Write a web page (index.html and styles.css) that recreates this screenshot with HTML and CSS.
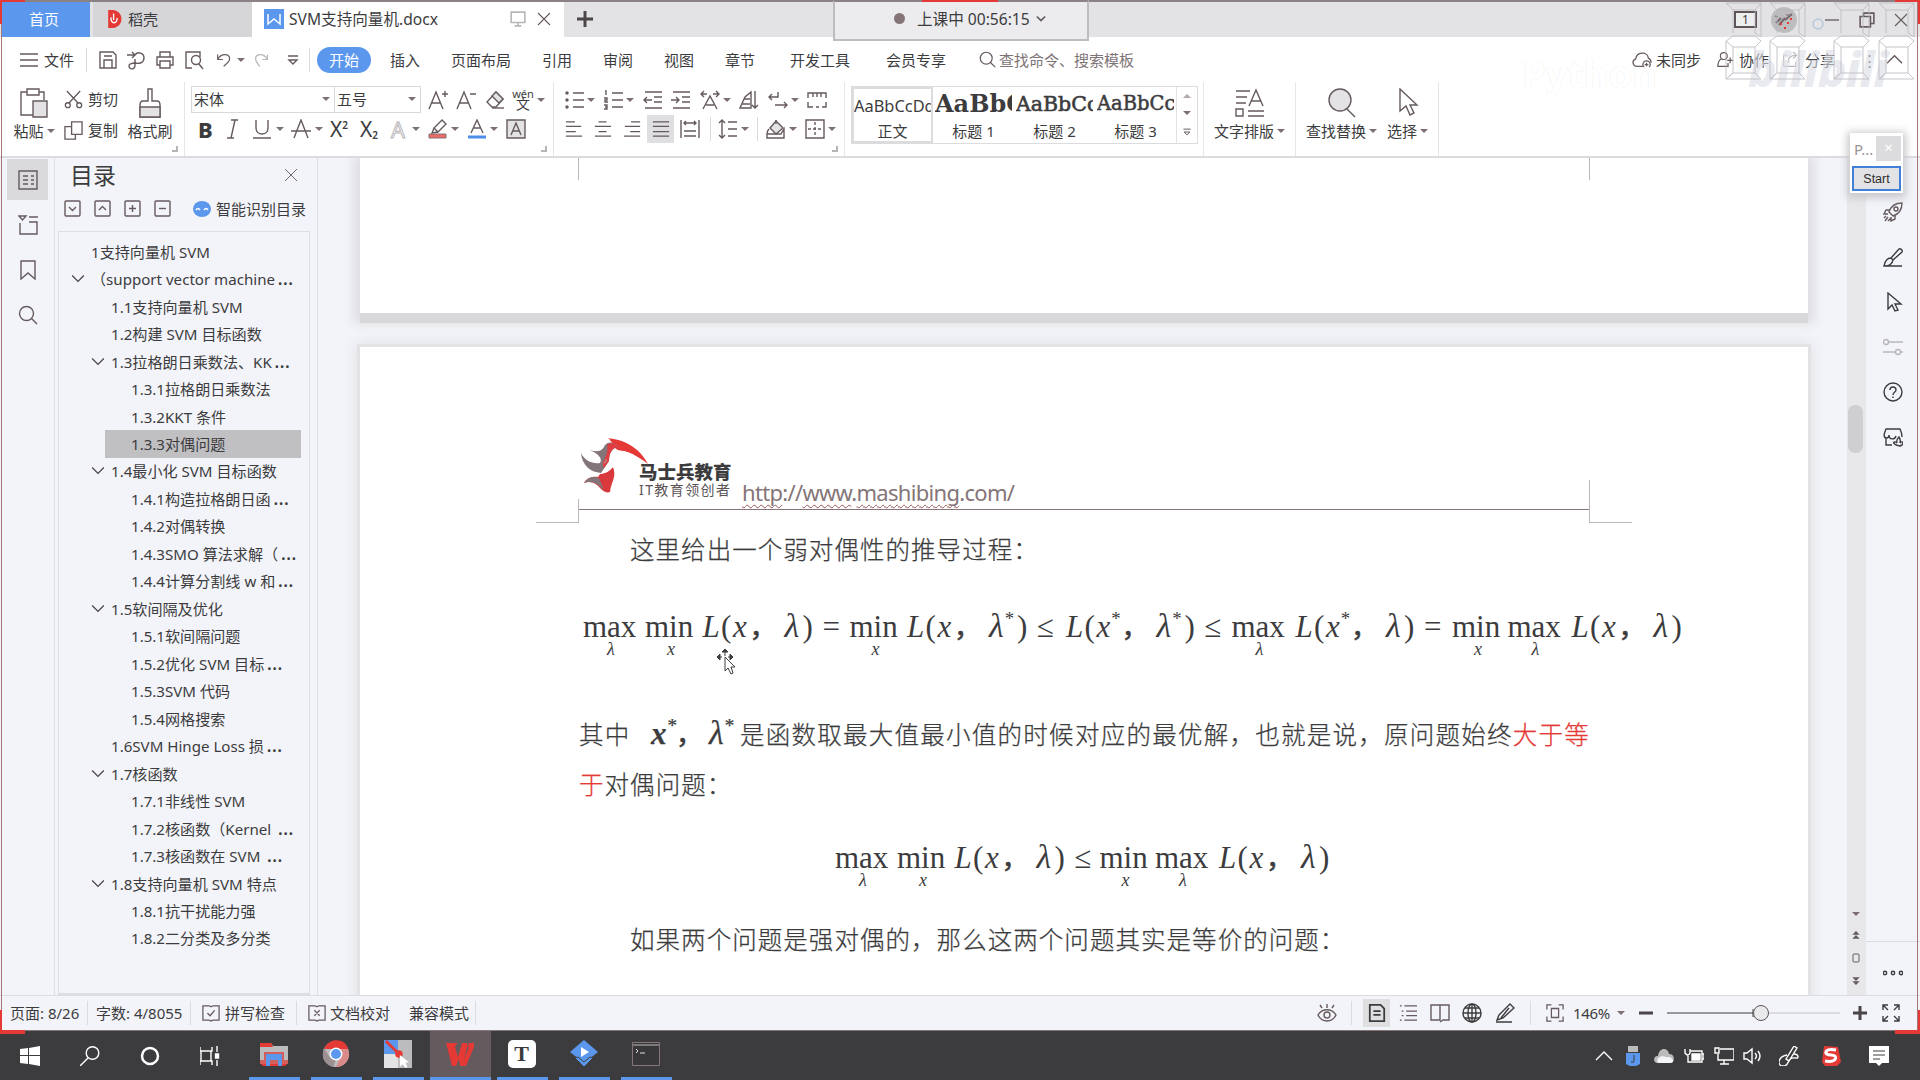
FILE: index.html
```html
<!DOCTYPE html>
<html lang="zh-CN">
<head>
<meta charset="utf-8">
<title>SVM支持向量机.docx</title>
<link rel="stylesheet" href="styles.css">
</head>
<body>
<svg class="defs" aria-hidden="true">
  <symbol id="caret" viewBox="0 0 8 6"><path d="M0 1h8L4 5z" fill="#7d6f72"/></symbol>
  <symbol id="chev" viewBox="0 0 12 12"><path d="M1 3l5 5 5-5"/></symbol>
  <symbol id="close" viewBox="0 0 14 14"><path d="M1 1l12 12M13 1L1 13"/></symbol>
  <symbol id="menu" viewBox="0 0 20 20"><path d="M1 4h18M1 10h18M1 16h18"/></symbol>
  <symbol id="save" viewBox="0 0 20 20"><path d="M2 2h13l3 3v13H2zM6 18v-8h8v8M6 6h8"/></symbol>
  <symbol id="pdf" viewBox="0 0 20 20"><path d="M1 5h8M6 2l3 3-3 3M9 5c3-4 9-2 9 3s-5 6-9 5M9 9v6c0 5-6 5-6 1 0-3 4-3 7-3"/></symbol>
  <symbol id="print" viewBox="0 0 20 20"><path d="M5 7V2h10v5M5 15H2V7h16v8h-3M5 11h10v7H5z"/></symbol>
  <symbol id="preview" viewBox="0 0 20 20"><path d="M8 18H2V2h14v5"/><circle cx="12" cy="10" r="4.5"/><path d="M15 14l4 5"/></symbol>
  <symbol id="undo" viewBox="0 0 20 20"><path d="M2 4v6h6M2 10c4-8 14-7 14-1 0 4-4 6-7 9"/></symbol>
  <symbol id="redo" viewBox="0 0 20 20"><path d="M17 4v6h-6M17 10C13 2 3 3 3 9c0 4 3 6 5 9"/></symbol>
  <symbol id="more" viewBox="0 0 12 14"><path d="M1 3h10M2 7h8l-4 4z"/></symbol>
  <symbol id="search" viewBox="0 0 20 20"><circle cx="8.5" cy="8.5" r="7"/><path d="M13.5 13.5L19 19"/></symbol>
  <symbol id="cloud" viewBox="0 0 22 20"><path d="M12 17H5C0 16 0 10 4 9c1-8 13-9 14-1 2 1 3 3 3 5"/><circle cx="16" cy="15" r="4"/><path d="M14 15h4M16 13v4"/></symbol>
  <symbol id="person" viewBox="0 0 20 20"><circle cx="8" cy="6" r="4"/><path d="M5 9c-3 2-4 5-4 9h12v-4M12 11h7M15.500 7.500v7"/></symbol>
  <symbol id="share" viewBox="0 0 20 20"><path d="M6 5H2v13h14v-5M7 14c0-6 3-9 10-9M13 1l4 4-4 4"/></symbol>
  <symbol id="paste" viewBox="0 0 30 30"><path d="M8 4H2v23h12M20 4h5v8M8 1h12v6H8z"/><path d="M14 13h14v16H14z" fill="#e3e3e5"/></symbol>
  <symbol id="cut" viewBox="0 0 20 20"><path d="M3 1l12 13M17 1L5 14"/><circle cx="4" cy="16" r="2.600"/><circle cx="16" cy="16" r="2.600"/></symbol>
  <symbol id="copy" viewBox="0 0 20 20"><path d="M8 1h11v13H8zM8 6H1v13h11v-5"/></symbol>
  <symbol id="brush" viewBox="0 0 24 30"><path d="M10 1h4v12h5c2 0 3 2 3 4v12H2V17c0-2 1-4 3-4h5z"/><path d="M2 19h20v10H2z" fill="#e3e3e5"/></symbol>
  <symbol id="eraser" viewBox="0 0 20 20"><path d="M11 2l7 7-7 8H7l-5-5z"/><path d="M11 2l7 7-4 4-7-7z" fill="#e3e3e5"/><path d="M7 18h12"/></symbol>
  <symbol id="marker" viewBox="0 0 20 20"><path d="M6 9l8-8 4 4-8 8zM6 9l-2 5 6-1"/><path d="M1 15h17v4H1z" fill="#ee6a66" stroke="#857578" stroke-width="1"/></symbol>
  <symbol id="bullets" viewBox="0 0 20 20"><path d="M8 3h11M8 10h11M8 17h11"/><g fill="#3c3c3e"><circle cx="2" cy="3" r="1"/><circle cx="2" cy="10" r="1"/><circle cx="2" cy="17" r="1"/></g></symbol>
  <symbol id="numbers" viewBox="0 0 20 20"><path d="M8 3h11M8 10h11M8 17h11M1 1h1v4M0 8h3v2H1v2h3M0 15h3v4H0M1 17h2"/></symbol>
  <symbol id="outdent" viewBox="0 0 20 20"><path d="M2 2h17M11 7h8M11 12h8M2 18h17M9 10H1M4 7l-3 3 3 3"/></symbol>
  <symbol id="indent" viewBox="0 0 20 20"><path d="M2 2h17M11 7h8M11 12h8M2 18h17M0 10h8M5 7l3 3-3 3"/></symbol>
  <symbol id="scalea" viewBox="0 0 20 20"><path d="M1 4h6M13 4h6M4 1L1 4l3 3M16 1l3 3-3 3M3 19l7-13 7 13M6 15h8"/></symbol>
  <symbol id="sort" viewBox="0 0 20 20"><path d="M1 18h11V2L6 7zM5 9h6M3 14h8M16 1v17M13 15l3 3 3-3"/></symbol>
  <symbol id="wrap" viewBox="0 0 20 20"><path d="M10 2v5H1M4 4L1 7l3 3M7 15h12M16 12l3 3-3 3"/></symbol>
  <symbol id="tabs" viewBox="0 0 20 20"><path d="M1 8V3h18v5M6 3v4M10 3v4M14 3v4M1 12v5h5M9 17h3M15 17h4v-5"/></symbol>
  <symbol id="left" viewBox="0 0 20 20"><path d="M1 2h10M1 7h17M1 13h11M1 18h18"/></symbol>
  <symbol id="center" viewBox="0 0 20 20"><path d="M5 2h9M1 7h18M5 13h9M1 18h18"/></symbol>
  <symbol id="right" viewBox="0 0 20 20"><path d="M9 2h10M2 7h17M8 13h11M1 18h18"/></symbol>
  <symbol id="justify" viewBox="0 0 20 20"><path d="M1 2h18M1 7h18M1 13h18M1 18h18"/></symbol>
  <symbol id="distribute" viewBox="0 0 20 20"><path d="M1 1v18M19 1v18M4 4h12M6 2L4 4l2 2M14 2l2 2-2 2M4 12h12M4 17h12"/></symbol>
  <symbol id="spacing" viewBox="0 0 20 20"><path d="M4 1v18M1 4l3-3 3 3M1 16l3 3 3-3M10 3h9M10 10h9M10 17h9"/></symbol>
  <symbol id="fill" viewBox="0 0 20 20"><path d="M10 2l7 7-7 6-6-6z" fill="#e3e3e5"/><path d="M10 5V1M3 10c-4 5 0 5 0 5M1 15h14l3-5v9H1z"/></symbol>
  <symbol id="borders" viewBox="0 0 20 20"><path d="M1 1h18v18H1z"/><path d="M10 3v14M3 10h14" stroke-dasharray="3 2"/></symbol>
  <symbol id="layout" viewBox="0 0 30 30"><path d="M1 3h14M1 9h11M1 15h10M1 21h7v7H1zM13 23h16M13 28h16M14 18l7-16 7 16M16 13h10"/></symbol>
  <symbol id="find" viewBox="0 0 30 30"><circle cx="13" cy="12" r="11" fill="#e3e3e5"/><path d="M20 21l8 8"/></symbol>
  <symbol id="pointer" viewBox="0 0 20 28"><path d="M2 1v22l6-5 4 9 4-2-4-8h7z"/></symbol>
  <symbol id="arrow" viewBox="0 0 20 20"><path d="M5 1v16l4-4 3 6 3-1-3-6h6z"/></symbol>
  <symbol id="toc" viewBox="0 0 20 20"><path d="M1 1h18v18H1zM5 6h5M5 10h5M5 14h5M13 6h3M13 10h3M13 14h3"/></symbol>
  <symbol id="nav" viewBox="0 0 20 20"><path d="M1 1h7L4.500 5zM11 2h9M11 7h8v12H2V8"/></symbol>
  <symbol id="bookmark" viewBox="0 0 20 20"><path d="M3 1h14v18l-7-6-7 6z"/></symbol>
  <symbol id="boxd" viewBox="0 0 18 18"><rect x="1" y="1" width="15" height="15" rx="1"/><path d="M5 7l3.500 3.500L12 7"/></symbol>
  <symbol id="boxu" viewBox="0 0 18 18"><rect x="1" y="1" width="15" height="15" rx="1"/><path d="M5 10l3.500-3.500L12 10"/></symbol>
  <symbol id="boxp" viewBox="0 0 18 18"><rect x="1" y="1" width="15" height="15" rx="1"/><path d="M5 8.500h7M8.500 5v7"/></symbol>
  <symbol id="boxm" viewBox="0 0 18 18"><rect x="1" y="1" width="15" height="15" rx="1"/><path d="M5 8.500h7"/></symbol>
  <symbol id="rocket" viewBox="0 0 20 20"><path d="M6 10c2-6 6-9 13-9 0 7-3 11-9 13zM7 8H3l-2 4h4M12 13v4l-4 2v-4M2 19l3-4M5 19l3-3M1 16l2-2"/><circle cx="13" cy="7" r="2"/></symbol>
  <symbol id="pen" viewBox="0 0 20 20"><path d="M8 11l8-9c1-1 4 1 3 3l-9 8M8 11c-4 0-6 3-7 8 5 0 8-1 9-6zM1 19h18"/></symbol>
  <symbol id="sliders" viewBox="0 0 20 20"><circle cx="3" cy="5" r="2.500"/><path d="M6 5h14M0 15h12M18 15h2"/><circle cx="15" cy="15" r="2.500"/></symbol>
  <symbol id="help" viewBox="0 0 20 20"><circle cx="10" cy="10" r="9"/><path d="M7 8c0-4 6-4 6 0 0 2-3 2-3 5M10 14.500v1.500"/></symbol>
  <symbol id="store" viewBox="0 0 20 20"><path d="M9 18H3v-7C0 10 1 7 3 2h14c2 4 2 7 2 8M1 8c1 5 5 3 5 0 0 5 6 5 7 1M13 18c-5-3-1-4 1-2-1-3 1-5 2-6 1 2 2 3 1 6 3-3 5 1 0 3z"/></symbol>
  <symbol id="spell" viewBox="0 0 20 20"><path d="M1 2h7l2 1 2-1h7v16h-7l-2 1-2-1H1zM6 10l3 3 5-6"/></symbol>
  <symbol id="proof" viewBox="0 0 20 20"><path d="M1 2h7l2 1 2-1h7v16h-7l-2 1-2-1H1zM7 7l6 6M13 7l-6 6"/></symbol>
  <symbol id="eye" viewBox="0 0 20 20"><path d="M1 12c4-7 14-7 18 0-4 8-14 8-18 0zM10 5V1M5 5L3 2M15 5l2-3"/><circle cx="10" cy="12" r="3"/></symbol>
  <symbol id="page" viewBox="0 0 20 20"><path d="M2 1h12l4 4v14H2zM6 8h8M6 12h8" stroke-width="2"/></symbol>
  <symbol id="outline" viewBox="0 0 20 20"><path d="M6 2h14M8 8h12M8 13h12M6 18h14M1 2h2M3 8h2M3 13h2M1 18h2"/></symbol>
  <symbol id="book" viewBox="0 0 20 20"><path d="M1 2h9v15H1zM10 2h9v15h-6l-3 2"/></symbol>
  <symbol id="globe" viewBox="0 0 20 20"><circle cx="10" cy="10" r="9"/><ellipse cx="10" cy="10" rx="4" ry="9"/><path d="M1 10h18M3 5h14M3 15h14M10 1v18"/></symbol>
  <symbol id="edit" viewBox="0 0 20 20"><path d="M4 12L15 1l4 4L8 15l-6 2zM14 5L6 15M1 19h16"/></symbol>
  <symbol id="fit" viewBox="0 0 20 20"><path d="M1 6V1h5M14 1h5v5M19 14v5h-5M6 19H1v-5M6 5h8v10H6z"/></symbol>
  <symbol id="expand" viewBox="0 0 20 20"><path d="M2 7V2h5M13 2h5v5M18 13v5h-5M7 18H2v-5M2 2l5 5M18 2l-5 5M18 18l-5-5M2 18l5-5"/></symbol>
</svg>

<div class="screen">
  <header class="tabbar">
    <div class="tab home">首页</div>
    <div class="tab docer"><svg class="dlogo" viewBox="0 0 16 20"><path d="M1 0h5c13 1 13 19 0 20H1z" fill="#e53935"/><path d="M4 8c0 8 7 8 7 1M7 11V4" fill="none" stroke="#fff" stroke-width="1.500"/></svg>稻壳</div>
    <div class="tab active"><span class="wlogo"><svg viewBox="0 0 20 20"><path d="M4 5v10l6-5 6 5V5" fill="none" stroke="#fff" stroke-width="1.500"/></svg></span><span class="tabname">SVM支持向量机.docx</span><svg class="i s14 pale" viewBox="0 0 14 14"><path d="M1 1h12v9H1zM7 10v3M4 13h6"/></svg><svg class="i s12"><use href="#close"/></svg></div>
    <div class="newtab"><svg class="i s14 heavy" viewBox="0 0 14 14"><path d="M7 0v14M0 7h14"/></svg></div>
    <div class="timer"><i class="dot"></i><span>上课中 00:56:15</span><svg class="i s8 bold" viewBox="0 0 12 12"><path d="M1 3l5 5 5-5"/></svg></div>
    <div class="winctl">
      <span class="count">1</span>
      <svg class="avatar" viewBox="0 0 28 28"><circle cx="14" cy="14" r="13" fill="#bdbcbe"/><path d="M6 17l5-5M9 19l6-7M15 14l7-6" stroke="#75686b" stroke-width="2" fill="none"/><path d="M5 10l3 1M16 9h4" stroke="#8d8386" stroke-width="1.500"/><path d="M17 17h2M10 18h2M20 13h2M14 22h2" stroke="#e53935" stroke-width="2"/></svg>
      <svg class="i s12" viewBox="0 0 12 12"><path d="M0 6h12"/></svg>
      <svg class="i s14" viewBox="0 0 14 14"><path d="M1 4h9v9H1zM4 4V1h9v9h-3"/></svg>
      <svg class="i s12"><use href="#close"/></svg>
    </div>
  </header>

  <nav class="menubar">
    <svg class="i"><use href="#menu"/></svg><span>文件</span><b class="vr"></b>
    <svg class="i"><use href="#save"/></svg><svg class="i"><use href="#pdf"/></svg><svg class="i"><use href="#print"/></svg><svg class="i"><use href="#preview"/></svg><svg class="i s17"><use href="#undo"/></svg><svg class="c"><use href="#caret"/></svg><svg class="i s17 pale"><use href="#redo"/></svg><svg class="i s10"><use href="#more"/></svg><b class="vr"></b>
    <span class="pill">开始</span><span>插入</span><span>页面布局</span><span>引用</span><span>审阅</span><span>视图</span><span>章节</span><span>开发工具</span><span>会员专享</span>
    <svg class="i s17"><use href="#search"/></svg><span class="hint">查找命令、搜索模板</span>
    <svg class="i"><use href="#cloud"/></svg><span>未同步</span><svg class="i s17"><use href="#person"/></svg><span>协作</span><svg class="i s17 pale"><use href="#share"/></svg><span>分享</span><span>⋮</span><svg class="i s17" viewBox="0 0 18 12"><path d="M1 10l8-8 8 8"/></svg>
  </nav>

  <section class="ribbon">
    <div class="group clip">
      <div class="big"><svg class="i s30"><use href="#paste"/></svg><span>粘贴<svg class="c"><use href="#caret"/></svg></span></div>
      <div class="pair"><div><svg class="i"><use href="#cut"/></svg>剪切</div><div><svg class="i"><use href="#copy"/></svg>复制</div></div>
      <div class="big"><svg class="i s30"><use href="#brush"/></svg><span>格式刷</span></div>
      <i class="corner"></i>
    </div>
    <div class="group font">
      <div class="row fr1">
        <div class="combo">宋体<svg class="c"><use href="#caret"/></svg></div>
        <div class="combo size">五号<svg class="c"><use href="#caret"/></svg></div>
        <svg class="i" viewBox="0 0 20 20"><path d="M1 19L8 2l7 17M4 13h8M17 1v6M14 4h6"/></svg>
        <svg class="i" viewBox="0 0 20 20"><path d="M1 19L8 2l7 17M4 13h8M14 4h6"/></svg>
        <svg class="i"><use href="#eraser"/></svg>
        <span class="wen"><small>wén</small><em>文</em></span>
        <svg class="c"><use href="#caret"/></svg>
      </div>
      <div class="row fr2">
        <span class="gl b">B</span><svg class="i" viewBox="0 0 20 20"><path d="M8 1h7M4 19h7M12 1L8 19"/></svg>
        <svg class="i" viewBox="0 0 20 20"><path d="M4 1v8c0 8 12 8 12 0V1M1 19h18"/></svg><svg class="c"><use href="#caret"/></svg>
        <svg class="i" viewBox="0 0 20 20"><path d="M3 19l7-18 7 18M0 12h20"/></svg><svg class="c"><use href="#caret"/></svg>
        <span class="gl">X<sup>2</sup></span><span class="gl">X<sub>2</sub></span>
        <span class="gl ghost">A</span><svg class="c"><use href="#caret"/></svg>
        <svg class="i"><use href="#marker"/></svg><svg class="c"><use href="#caret"/></svg>
        <svg class="i" viewBox="0 0 20 20"><path d="M4 14l6-13 6 13M6 9h8"/><path d="M1 18h18" stroke="#4d8eea" stroke-width="3"/></svg><svg class="c"><use href="#caret"/></svg>
        <svg class="i" viewBox="0 0 20 20"><path d="M1 1h18v18H1z" fill="#e3e3e5"/><path d="M5 16l5-12 5 12M7 12h6"/></svg>
      </div>
      <i class="corner"></i>
    </div>
    <div class="group para">
      <div class="row pr1">
        <svg class="i"><use href="#bullets"/></svg><svg class="c"><use href="#caret"/></svg><svg class="i"><use href="#numbers"/></svg><svg class="c"><use href="#caret"/></svg><svg class="i"><use href="#outdent"/></svg><svg class="i"><use href="#indent"/></svg><svg class="i"><use href="#scalea"/></svg><svg class="c"><use href="#caret"/></svg><svg class="i"><use href="#sort"/></svg><svg class="i"><use href="#wrap"/></svg><svg class="c"><use href="#caret"/></svg><svg class="i"><use href="#tabs"/></svg>
      </div>
      <div class="row pr2">
        <svg class="i s18"><use href="#left"/></svg><svg class="i s18"><use href="#center"/></svg><svg class="i s18"><use href="#right"/></svg><span class="on"><svg class="i s18"><use href="#justify"/></svg></span><svg class="i"><use href="#distribute"/></svg><b class="vr"></b><svg class="i"><use href="#spacing"/></svg><svg class="c"><use href="#caret"/></svg><b class="vr"></b><svg class="i"><use href="#fill"/></svg><svg class="c"><use href="#caret"/></svg><svg class="i"><use href="#borders"/></svg><svg class="c"><use href="#caret"/></svg>
      </div>
      <i class="corner"></i>
    </div>
    <div class="group styles">
      <div class="gallery">
        <div class="style sel"><span class="pv p0">AaBbCcDd</span><span>正文</span></div>
        <div class="style"><span class="pv p1">AaBbC</span><span>标题 1</span></div>
        <div class="style"><span class="pv p2">AaBbCc</span><span>标题 2</span></div>
        <div class="style"><span class="pv p3">AaBbCc</span><span>标题 3</span></div>
        <div class="gscroll"><svg class="c up"><use href="#caret"/></svg><svg class="c"><use href="#caret"/></svg><svg class="i s8"><use href="#more"/></svg></div>
      </div>
    </div>
    <div class="group tools"><div class="big"><svg class="i s30"><use href="#layout"/></svg><span>文字排版<svg class="c"><use href="#caret"/></svg></span></div></div>
    <div class="group tools edit"><div class="big"><svg class="i s30"><use href="#find"/></svg><span>查找替换<svg class="c"><use href="#caret"/></svg></span></div><div class="big"><svg class="i s30"><use href="#pointer"/></svg><span>选择<svg class="c"><use href="#caret"/></svg></span></div></div>
  </section>

  <main class="work">
    <aside class="rail">
      <span class="cell on"><svg class="i"><use href="#toc"/></svg></span><span class="cell"><svg class="i"><use href="#nav"/></svg></span><span class="cell"><svg class="i"><use href="#bookmark"/></svg></span><span class="cell"><svg class="i"><use href="#search"/></svg></span>
    </aside>
    <aside class="panel">
      <div class="phead"><h2>目录</h2><svg class="i s12"><use href="#close"/></svg></div>
      <div class="ptools"><svg class="i s18"><use href="#boxd"/></svg><svg class="i s18"><use href="#boxu"/></svg><svg class="i s18"><use href="#boxp"/></svg><svg class="i s18"><use href="#boxm"/></svg><svg class="bot" viewBox="0 0 18 16"><ellipse cx="9" cy="8" rx="9" ry="8" fill="#5b97ec"/><path d="M3 9q2-3 4 0M11 9q2-3 4 0" fill="none" stroke="#fff" stroke-width="1.500"/></svg><span>智能识别目录</span></div>
      <ul class="tree">
        <li class="l0"><span>1支持向量机 SVM</span></li>
        <li class="l0 open"><svg class="i s12"><use href="#chev"/></svg><span class="fw">（support vector machine</span><b>...</b></li>
        <li class="l1"><span>1.1支持向量机 SVM</span></li>
        <li class="l1"><span>1.2构建 SVM 目标函数</span></li>
        <li class="l1 open"><svg class="i s12"><use href="#chev"/></svg><span>1.3拉格朗日乘数法、KK</span><b>...</b></li>
        <li class="l2"><span>1.3.1拉格朗日乘数法</span></li>
        <li class="l2"><span>1.3.2KKT 条件</span></li>
        <li class="l2 sel"><span>1.3.3对偶问题</span></li>
        <li class="l1 open"><svg class="i s12"><use href="#chev"/></svg><span>1.4最小化 SVM 目标函数</span></li>
        <li class="l2"><span>1.4.1构造拉格朗日函</span><b>...</b></li>
        <li class="l2"><span>1.4.2对偶转换</span></li>
        <li class="l2"><span>1.4.3SMO 算法求解（</span><b>...</b></li>
        <li class="l2"><span>1.4.4计算分割线 w 和</span><b>...</b></li>
        <li class="l1 open"><svg class="i s12"><use href="#chev"/></svg><span>1.5软间隔及优化</span></li>
        <li class="l2"><span>1.5.1软间隔问题</span></li>
        <li class="l2"><span>1.5.2优化 SVM 目标</span><b>...</b></li>
        <li class="l2"><span>1.5.3SVM 代码</span></li>
        <li class="l2"><span>1.5.4网格搜索</span></li>
        <li class="l1"><span>1.6SVM Hinge Loss 损</span><b>...</b></li>
        <li class="l1 open"><svg class="i s12"><use href="#chev"/></svg><span>1.7核函数</span></li>
        <li class="l2"><span>1.7.1非线性 SVM</span></li>
        <li class="l2"><span>1.7.2核函数（Kernel</span><b class="far">...</b></li>
        <li class="l2"><span>1.7.3核函数在 SVM</span><b class="far">...</b></li>
        <li class="l1 open"><svg class="i s12"><use href="#chev"/></svg><span>1.8支持向量机 SVM 特点</span></li>
        <li class="l2"><span>1.8.1抗干扰能力强</span></li>
        <li class="l2"><span>1.8.2二分类及多分类</span></li>
      </ul>
    </aside>

    <div class="canvas">
      <article class="sheet first"><i class="mark ml"></i><i class="mark mr"></i></article>
      <article class="sheet second">
        <i class="mark bl"></i><i class="mark br"></i>
        <div class="dochead">
          <svg class="horse" viewBox="0 0 68 56"><path d="M26 1c22 2 34 13 41 26C55 18 48 14 37 13L28 7l8 1c-3-4-6-6-10-7z" fill="#e53935"/><path d="M28 2c14 2 26 11 36 22-8-6-16-10-27-11z" fill="#e53935"/><path d="M9 13c9 3 13 0 15-5 4-4 9-3 13 2-6 1-9 6-9 14l-8 12C9 35 1 28 0 16c4 8 11 11 19 10 3-5-2-9-10-13z" fill="#83757a"/><path d="M26 8c4-3 8-2 11 2-6 1-9 6-9 14l-5 7c-4-7 6-13 3-23z" fill="#df3f42"/><path d="M32 30c-4 5-9 7-13 7l-2 3c-7-1-12 2-14 6 7-3 13 1 17 6 3 3 6 4 9 3 1-10 7-15 3-25z" fill="#d9393d"/><path d="M3 46c4-6 9-7 15-5l5 12c-6-6-12-10-20-7z" fill="#83757a"/><path d="M23 26q3-1 2-4" fill="none" stroke="#aaa" stroke-width="1"/></svg>
          <div class="brand"><strong>马士兵教育</strong><span>IT教育领创者</span></div>
          <p class="url"><u>http</u>://<u>www</u>.<u>mashibing</u>.com/</p>
        </div>
        <p class="t lead">这里给出一个弱对偶性的推导过程：</p>
        <div class="eq e1">
          <span class="op max">max<sub>λ</sub></span><span class="op min">min<sub>x</sub></span><i class="L">L</i><span class="lp">(</span><i class="x">x</i><span class="cm">，</span><i class="la">λ</i><span class="rp">)</span><span class="rel">=</span><span class="op min">min<sub>x</sub></span><i class="L">L</i><span class="lp">(</span><i class="x">x</i><span class="cm">，</span><i class="las">λ<sup>*</sup></i><span class="rp">)</span><span class="rel">≤</span><i class="L">L</i><span class="lp">(</span><i class="xs">x<sup>*</sup></i><span class="cm">，</span><i class="las">λ<sup>*</sup></i><span class="rp">)</span><span class="rel">≤</span><span class="op max">max<sub>λ</sub></span><i class="L">L</i><span class="lp">(</span><i class="xs">x<sup>*</sup></i><span class="cm">，</span><i class="la">λ</i><span class="rp">)</span><span class="rel">=</span><span class="op min">min<sub>x</sub></span><span class="op max">max<sub>λ</sub></span><i class="L">L</i><span class="lp">(</span><i class="x">x</i><span class="cm">，</span><i class="la">λ</i><span class="rp">)</span>
        </div>
        <div class="t mixed"><span class="w">其中</span><span class="eq in"><i class="xs">x<sup>*</sup></i><span class="cm">，</span><i class="las">λ<sup>*</sup></i></span><span>是函数取最大值最小值的时候对应的最优解，也就是说，原问题始终<em>大于等</em></span></div>
        <p class="t second-line"><em>于</em>对偶问题：</p>
        <div class="eq e2">
          <span class="op max">max<sub>λ</sub></span><span class="op min">min<sub>x</sub></span><i class="L">L</i><span class="lp">(</span><i class="x">x</i><span class="cm">，</span><i class="la">λ</i><span class="rp">)</span><span class="rel">≤</span><span class="op min">min<sub>x</sub></span><span class="op max">max<sub>λ</sub></span><i class="L">L</i><span class="lp">(</span><i class="x">x</i><span class="cm">，</span><i class="la">λ</i><span class="rp">)</span>
        </div>
        <p class="t last">如果两个问题是强对偶的，那么这两个问题其实是等价的问题：</p>
        <svg class="mouse" viewBox="0 0 20 28"><path d="M9 1v7M9 1L6 4h6zM1 9h5M1 9l3-3v6zM12 9h5M17 9l-3-3v6z" fill="#3c3c3e" stroke="#3c3c3e"/><path d="M9 9v14l3-3 3 6 2-1-2-6h4z" fill="#fff" stroke="#3c3c3e"/></svg>
      </article>
    </div>

    <div class="vscroll"><i class="thumb"></i><div class="vbtn"><svg class="c"><use href="#caret"/></svg><svg class="i s8" viewBox="0 0 8 10"><path d="M2 4l2-2 2 2zM2 8l2-2 2 2z" fill="#857578"/></svg><svg class="i s8 thin" viewBox="0 0 8 10"><rect x="1" y="1" width="6" height="8" rx="1"/></svg><svg class="i s8" viewBox="0 0 8 10"><path d="M2 2l2 2 2-2zM2 6l2 2 2-2z" fill="#857578"/></svg></div></div>
    <aside class="side">
      <svg class="i"><use href="#rocket"/></svg><svg class="i dark"><use href="#pen"/></svg><svg class="i dark"><use href="#arrow"/></svg><svg class="i pale"><use href="#sliders"/></svg><svg class="i dark"><use href="#help"/></svg><svg class="i dark"><use href="#store"/></svg>
      <div class="dots"><svg class="i dark" viewBox="0 0 20 20"><circle cx="2" cy="10" r="1.700"/><circle cx="10" cy="10" r="1.700"/><circle cx="18" cy="10" r="1.700"/></svg></div>
    </aside>
  </main>

  <footer class="status">
    <span>页面: 8/26</span><b class="vr"></b><span>字数: 4/8055</span><b class="vr"></b><svg class="i s18"><use href="#spell"/></svg><span>拼写检查</span><b class="vr"></b><svg class="i s18"><use href="#proof"/></svg><span>文档校对</span><span>兼容模式</span><b class="vr"></b>
    <svg class="i"><use href="#eye"/></svg><b class="vr"></b><span class="on"><svg class="i s18 dark"><use href="#page"/></svg></span><svg class="i s18"><use href="#outline"/></svg><svg class="i"><use href="#book"/></svg><svg class="i dark"><use href="#globe"/></svg><svg class="i dark"><use href="#edit"/></svg><b class="vr"></b><svg class="i s18"><use href="#fit"/></svg><span class="zoom">146%</span><svg class="c"><use href="#caret"/></svg><svg class="i s12 heavy" viewBox="0 0 12 12"><path d="M0 6h12"/></svg>
    <svg class="slider" viewBox="0 0 173 20"><path d="M0 10h88" stroke="#3c3c3e"/><path d="M100 10h73" stroke="#c4c4c7"/><path d="M86 6v8" stroke="#3c3c3e"/><circle cx="94" cy="10" r="7.500" fill="#e9e9eb" stroke="#5d5558"/></svg>
    <svg class="i s12 heavy" viewBox="0 0 12 12"><path d="M0 6h12M6 0v12"/></svg><svg class="i dark"><use href="#expand"/></svg>
  </footer>

  <footer class="taskbar">
    <div class="apps">
      <span><svg viewBox="0 0 20 20"><path d="M0 3l8-1v7H0zM9 2l11-2v9H9zM0 10h8v8l-8-1zM9 10h11v10L9 18z" fill="#fff"/></svg></span>
      <span><svg viewBox="0 0 20 20" class="w"><circle cx="12.500" cy="7" r="6.300"/><path d="M8 12l-8 8"/></svg></span>
      <span><svg viewBox="0 0 20 20" class="w"><circle cx="10" cy="10" r="8" stroke-width="2.500"/></svg></span>
      <span><svg viewBox="0 0 20 20" class="w"><path d="M0 1v4h12V1M0 19v-4h12v4M1 5v10h10V5M17 0v6M17 14v6"/><path d="M15.500 8h3v4h-3z" fill="#fff"/></svg></span>
    </div>
    <div class="running">
      <span><svg viewBox="0 0 28 28"><path d="M0 3h11l2 3h15v18H0z" fill="#bcbcbe"/><path d="M0 3h11l2 4H0zM1 24h26l-2 2H3z" fill="#e53935"/><path d="M4 12h20v8h4v4H0v-4h4z" fill="#d35e5b"/><path d="M6 26V14h16v12h-4v-6h-8v6z" fill="#5b97ec"/></svg></span>
      <span><svg viewBox="0 0 28 28"><circle cx="14" cy="14" r="13" fill="#bcbcbe"/><path d="M2 9C8-4 24-1 26 9H14z" fill="#e53935"/><path d="M26 9c4 9-3 18-12 18l6-13-3-5z" fill="#d98a89"/><path d="M2 8l6 10 6 2-3 7C1 24-1 16 2 8z" fill="#9b8f92"/><circle cx="14" cy="14" r="6.500" fill="#fff"/><circle cx="14" cy="14" r="5" fill="#5b97ec"/></svg></span>
      <span><svg viewBox="0 0 30 30"><path d="M0 0h30v30H0z" fill="#bcbcbe"/><path d="M0 0h15v15H0z" fill="#5b97ec"/><path d="M0 15h15v15H0z" fill="#e3e3e5"/><path d="M2 1l13 13" stroke="#e53935" stroke-width="3"/><circle cx="16" cy="15" r="4" fill="#e53935"/><path d="M17 16v13l3-3 3 4 2-1-2-5h4z" fill="#fff"/></svg></span>
      <span class="cur"><svg viewBox="0 0 28 28"><path d="M0 3h11l-2 4 3 10 4-14h5v5l-3 12 5-13h-2l2-4h5v4l-8 19h-6l-1-7-3 7H6z" fill="#e53935"/></svg></span>
      <span><span class="typora">T</span></span>
      <span><svg viewBox="0 0 28 28"><path d="M14 0l14 12-14 11L0 12z" fill="#5b97ec"/><path d="M5 18l3-1 6 5 6-5 3 1-9 9z" fill="#5b97ec" stroke="#3c3c3e"/><path d="M11 7l8 5-8 5z" fill="#fff"/></svg></span>
      <span><svg viewBox="0 0 28 24"><path d="M.5.500h27v23H.5z" fill="#38383a" stroke="#857578"/><path d="M1 3h26" stroke="#bbb"/><path d="M4 7l2 2-2 2M8 11h5" fill="none" stroke="#ddd"/></svg></span>
    </div>
    <div class="tray">
      <svg class="w" viewBox="0 0 20 20"><path d="M2 14l8-8 8 8"/></svg>
      <svg viewBox="0 0 20 20"><path d="M5 0h10v6H5z" fill="#bbb"/><path d="M3 7h14v11l-4 2H7l-4-2z" fill="#5b97ec"/><path d="M11 9v6q0 2-3 1" fill="none" stroke="#3c3c3e"/></svg>
      <svg viewBox="0 0 20 20"><path d="M3 17c-5-1-3-8 1-7C5 1 14 1 15 8c6-1 6 8 2 9z" fill="#bbb"/><path d="M4 17c-3-5 4-8 8-6 7-1 10 6 4 6z" fill="#f3f4f7"/></svg>
      <svg class="w" viewBox="0 0 20 20"><path d="M6 5h12v11H4V9M1 3v4q3 4 5 0V3M18 8h2v5h-2"/><path d="M8 8h8v6H8z" fill="#fff"/></svg>
      <svg class="w" viewBox="0 0 20 20"><path d="M6 3h14v11H4V8M1 2h4v5H1zM10 14v4M6 18h9"/></svg>
      <svg class="w" viewBox="0 0 20 20"><path d="M1 7h3l5-4v14l-5-4H1zM12 7q3 3 0 6M15 5q4 5 0 10"/></svg>
      <svg class="w" viewBox="0 0 20 20"><path d="M7 13L15 0l3 2-8 13zM8 9c-10 2-10 11-4 11 8 0 2-9 13-8 3 1 3-4-2-4"/></svg>
      <svg viewBox="0 0 20 20"><path d="M3 0l14 1 3 15-4 4H4L1 16z" fill="#e53935"/><path d="M15 4C3 2 2 9 10 9s6 8-6 6" fill="none" stroke="#fff" stroke-width="3"/></svg>
      <svg viewBox="0 0 20 20"><path d="M0 0h20v17h-7l-3 3-3-3H0z" fill="#fff"/><path d="M4 5h12M4 9h12M4 13h7" stroke="#3c3c3e" fill="none"/></svg>
    </div>
  </footer>

  <div class="channel">Python</div>
  <div class="watermark">bilibili</div>
  <svg class="digits" viewBox="0 0 194 82"><g id="seg" fill="none" stroke="#b9b9c0"><path d="M2 1h35l-6 7H9zM37 1v34l-6-4V8M9 8v23M2 39l7-5h22l6 5-6 6H9zM2 39v38l7-6V45M31 45v26l6 6M2 77h35l-6-6H9z"/></g><use href="#seg" x="44"/><use href="#seg" x="108"/><use href="#seg" x="153"/><circle cx="94" cy="22" r="5" fill="none" stroke="#8fb0dc"/></svg>
  <div class="popup"><div class="ptitle"><span>P...</span><b>×</b></div><button>Start</button></div>
  <i class="frame"></i><i class="rc tl"></i><i class="rc tr"></i><i class="rc bl2"></i><i class="rc br2"></i><i class="topred"></i>
</div>
</body>
</html>
```
FILE: styles.css
```css
* { box-sizing: border-box; }
body { margin: 0; background: #f3f4f9; overflow: hidden; }
.defs { position: absolute; width: 0; height: 0; }
.screen { position: relative; width: 1920px; height: 1080px; display: flex; flex-direction: column; font: 15px/20px "Noto Sans", "Noto Sans CJK SC", sans-serif; color: #3c3c3e; white-space: nowrap; overflow: hidden; }
p, h2, ul { margin: 0; padding: 0; font-weight: 400; }
.i { width: 20px; height: 20px; fill: none; stroke: #655a5d; stroke-width: 1.4; flex: none; display: block; }
.c { width: 8px; height: 6px; flex: none; }
.s8 { width: 10px; height: 10px; }
.s10 { width: 12px; height: 14px; }
.s12 { width: 14px; height: 14px; stroke-width: 1.1; }
.s14 { width: 16px; height: 16px; }
.s17 { width: 17px; height: 17px; }
.s18 { width: 18px; height: 18px; }
.s30 { width: 30px; height: 30px; }
.pale { stroke: #b9b6b9; }
.dark { stroke: #3c3c3e; }
.heavy { stroke-width: 2.6; stroke: #4b4548; }
.bold { stroke-width: 2; }
.thin { stroke-width: 1; }
.vr { width: 1px; height: 24px; background: #dcdcdf; flex: none; }

/* document tabs */
.tabbar { height: 37px; flex: none; background: #e3e3e5; display: flex; padding-left: 2px; border-top: 2px solid #8b8285; position: relative; }
.tab { display: flex; align-items: center; padding-bottom: 1px; }
.home { width: 88px; background: #5b97ec; color: #fff; justify-content: center; padding-right: 4px; }
.docer { width: 159px; margin-left: 3px; padding-left: 14px; background: #d6d6d9; gap: 6px; }
.dlogo { width: 15px; height: 18px; }
.active { width: 312px; background: #fff; padding: 0 13px 1px 12px; }
.wlogo { width: 20px; height: 20px; background: #5b97ec; display: flex; margin-right: 5px; }
.tabname { width: 221px; font-size: 15.6px; }
.active .pale { margin-right: 11px; }
.newtab { display: flex; align-items: center; padding: 0 0 2px 13px; width: 269px; }
.timer { width: 256px; height: 41px; margin-top: -2px; z-index: 2; background: #ececee; border: 2px solid #bdbcbe; border-top-color: #8b8285; display: flex; align-items: center; padding: 0 0 4px 59px; font-size: 15.6px; }
.timer span { margin: 0 6px 0 12px; }
.dot { width: 11px; height: 11px; border-radius: 50%; background: #857578; }
.winctl { display: grid; grid-template-columns: 36px 55px 34px 35px 20px; align-items: center; margin-left: 645px; }
.count { width: 23px; height: 17px; border: 2px solid #5d5558; font-size: 12px; line-height: 13px; text-align: center; background: #eee; }
.avatar { width: 28px; height: 28px; }

.menubar { height: 45px; flex: none; background: #fff; padding-left: 19px; display: grid; grid-template-columns: 25px 42px 12px 28px 29px 29px 32px 21px 16px 34px 22px 8px 73px 61px 91px 61px 61px 61px 65px 96px 93px 20px 633px 24px 61px 22px 43px 23px 57px 24px 20px; align-items: center; }
.pill { background: #5b97ec; color: #fff; width: 54px; height: 26px; border-radius: 13px; line-height: 26px; text-align: center; }
.hint { color: #7d7376; }

/* ribbon */
.ribbon { height: 76px; flex: none; background: #fff; display: flex; border-bottom: 2px solid #dcdcdf; }
.group { position: relative; border-right: 1px solid #e6e6e9; padding-top: 4px; }
.clip { width: 185px; display: flex; padding-left: 11px; }
.font { width: 369px; }
.para { width: 291px; }
.styles { width: 359px; padding-left: 6px; }
.big { display: flex; flex-direction: column; align-items: center; gap: 5px; padding-top: 2px; }
.big span { display: flex; align-items: center; gap: 3px; line-height: 16px; }
.clip .big:first-child { width: 46px; }
.pair { width: 64px; padding-left: 7px; display: flex; flex-direction: column; gap: 11px; padding-top: 3px; }
.pair div { display: flex; align-items: center; gap: 5px; height: 20px; }
.pair .i { width: 19px; height: 19px; }
.clip .big:nth-child(3) { width: 58px; }
.corner { position: absolute; right: 6px; bottom: 4px; width: 6px; height: 6px; border: solid #b5b5b8; border-width: 0 2px 2px 0; }
.row { display: grid; align-items: center; height: 27px; }
.fr1 { padding-left: 6px; grid-template-columns: 143px 94px 28px 29px 28px 24px 8px; }
.fr2 { padding-left: 10px; margin-top: 1px; height: 30px; grid-template-columns: 28px 29px 24px 15px 24px 15px 30px 28px 24px 16px 23px 16px 23px 16px 20px; }
.pr1 { padding-left: 11px; grid-template-columns: 22px 17px 22px 17px 28px 29px 23px 16px 29px 23px 16px 20px; }
.pr2 { padding-left: 11px; margin-top: 1px; height: 30px; grid-template-columns: 29px 29px 24px 33px 30px 8px 23px 16px 9px 23px 16px 23px 10px; }
.combo { height: 27px; width: 144px; border: 1px solid #d9d9dc; display: flex; align-items: center; justify-content: space-between; padding: 0 4px 2px 2px; }
.combo.size { width: 87px; }
.wen { font-size: 14px; display: flex; flex-direction: column; align-items: center; width: 20px; line-height: 12px; }
.wen small { font-size: 11px; line-height: 9px; }
.wen em { font-style: normal; }
.gl { font-size: 21px; line-height: 22px; position: relative; }
.gl sup, .gl sub { font-size: 10px; line-height: 0; font-weight: 600; }
.gl sub { vertical-align: -2px; }
.b { font-weight: 800; font-size: 22px; padding-left: 3px; }
.ghost { color: #fff; -webkit-text-stroke: 1px #b9b6b9; font-size: 22px; padding-left: 3px; }
.on { background: #dfdfe2; width: 27px; height: 28px; display: flex; align-items: center; justify-content: center; }
.gallery { display: flex; width: 347px; height: 58px; border: 1px solid #dcdcdf; }
.style { width: 81px; display: flex; flex-direction: column; align-items: center; overflow: hidden; padding: 0 2px; }
.style > span:last-child { line-height: 18px; }
.sel.style { border: 2px solid #dcdcdf; padding: 0; }
.style .pv { height: 35px; width: 77px; overflow: hidden; flex: none; }
.sel .pv { height: 33px; }
.p0 { font-size: 16.4px; line-height: 34px; }
.p1 { font: 700 24px/34px "DejaVu Serif", serif; }
.p2 { font: 20.5px/34px "DejaVu Serif", serif; -webkit-text-stroke: .6px #3c3c3e; }
.p3 { font: 19.5px/34px "DejaVu Serif", serif; -webkit-text-stroke: .5px #3c3c3e; }
.gscroll { width: 21px; border-left: 1px solid #e3e3e5; display: flex; flex-direction: column; align-items: center; justify-content: space-around; }
.up { transform: rotate(180deg); opacity: .6; }
.tools { width: 92px; padding-left: 10px; display: flex; }
.edit { width: 143px; gap: 10px; }
.edit .big:nth-child(2) .i { height: 28px; margin-bottom: 2px; }

/* work area */
.work { flex: none; height: 837px; display: flex; background: #f3f4f9; }
.rail { width: 55px; border-right: 1px solid #dedee2; padding: 1px 0 0 7px; display: flex; flex-direction: column; gap: 4px; }
.cell { width: 41px; height: 41px; display: flex; align-items: center; justify-content: center; }
.cell.on { background: #dadadd; }
.panel { width: 263px; border-right: 1px solid #dedee2; padding-left: 3px; }
.phead { display: flex; justify-content: space-between; align-items: center; height: 34px; padding: 0 19px 0 12px; }
.phead .i { stroke-width: .9; }
h2 { font-size: 23px; }
.ptools { display: grid; grid-template-columns: 30px 30px 30px 39px 23px auto; align-items: center; padding: 1px 0 0 6px; height: 33px; }
.bot { width: 18px; height: 16px; }
.tree { list-style: none; width: 252px; height: 764px; margin-top: 6px; border: 1px solid #dedee2; border-bottom-width: 2px; padding-top: 6px; font-size: 15.1px; }
.tree li { height: 27.480px; display: flex; align-items: center; }
.tree b { margin-left: 3px; letter-spacing: 1px; }
.tree b.far { margin-left: 7px; }
.tree .i { margin-right: 6px; stroke: #4b4548; }
.l0 { padding-left: 32px; }
.l1 { padding-left: 52px; }
.l2 { padding-left: 72px; }
.l0.open { padding-left: 12px; }
.l1.open { padding-left: 32px; }
.tree .sel { background: #c0c0c3; margin: 0 8px 0 46px; padding-left: 26px; }
.canvas { width: 1529px; padding-left: 42px; overflow: hidden; }
.sheet { width: 1448px; background: #fff; position: relative; box-shadow: 0 0 0 3px #e3e3e6, 0 0 14px 3px #dedee2; }
.first { height: 155px; box-shadow: 0 10px 0 0 #d8d8db, 0 4px 10px 7px #dfdfe3; }
.second { margin-top: 34px; height: 700px; padding: 90px 0 0 219px; }
.mark { position: absolute; border: 0 solid #b9b9bc; }
.ml { left: 218px; top: 0; height: 22px; border-left-width: 1px; }
.mr { left: 1229px; top: 0; height: 22px; border-left-width: 1px; }
.bl { left: 176px; top: 152px; width: 43px; height: 24px; border-width: 0 1px 1px 0; }
.br { left: 1229px; top: 133px; width: 43px; height: 43px; border-width: 0 0 1px 1px; }
.dochead { height: 73px; width: 1010px; border-bottom: 1px solid #857578; display: flex; align-items: flex-start; padding-left: 2px; }
.horse { width: 68px; height: 56px; }
.brand { display: flex; flex-direction: column; margin: 24px 0 0 -10px; width: 103px; }
.brand strong { font: 800 18.500px/20px "Noto Sans CJK SC", sans-serif; }
.brand span { font-size: 14px; line-height: 17px; letter-spacing: 1.4px; color: #5b5356; }
.url { font: 22px/30px "Noto Sans", sans-serif; color: #857578; margin-top: 40px; letter-spacing: -.7px; }
.url u { text-decoration: underline wavy #9b5558 1px; text-underline-offset: 3px; text-decoration-skip-ink: none; }
.t { font: 300 24.500px/36px "Noto Sans CJK SC", sans-serif; letter-spacing: 1.05px; -webkit-text-stroke: .25px; }
.lead { margin: 21px 0 0 51px; }
.eq { display: flex; align-items: baseline; font: 31px/28px "Liberation Serif", "Noto Sans CJK SC", serif; letter-spacing: 0; }
.eq > * { flex: none; }
.op { display: grid; justify-items: start; }
.op sub { font: italic 18px/17px "Liberation Serif", serif; padding: 0 0 0 24px; }
.max { width: 62px; }
.min { width: 55.500px; }
.min sub { padding-left: 22px; }
.L { width: 20.500px; padding-left: 2px; }
.lp { width: 12px; }
.x { width: 16.500px; }
.cm { width: 35px; font-size: 27px; -webkit-text-stroke: .6px; }
.la { width: 18px; font-size: 34px; }
.rp { width: 20px; }
.rel { width: 27px; }
.xs { width: 25px; }
.las { width: 28px; font-size: 34px; }
.eq sup { font-size: 19px; line-height: 0; vertical-align: 12px; font-style: normal; font-weight: 400; margin-left: 1px; }
.e1 { margin: 45px 0 0 4px; height: 58px; }
.e1 > :nth-last-child(-n+8) { position: relative; left: 1px; }
.mixed { display: flex; align-items: baseline; margin-top: 46px; height: 36px; letter-spacing: 1.26px; }
.w { width: 72px; }
.in { width: 89px; }
.in .cm { width: 33px; }
.in .xs { font-weight: 700; }
.mixed em, .second-line em { color: #e53935; font-style: normal; }
.second-line { margin-top: 14px; }
.e2 { margin: 41px 0 0 256px; height: 54px; }
.e2 .rel { width: 25px; }
.last { margin: 24px 0 0 51px; }
.mouse { position: absolute; left: 356px; top: 301px; width: 20px; height: 28px; }
.vscroll { width: 19px; background: #e8e8eb; display: flex; flex-direction: column; justify-content: space-between; align-items: center; padding-right: 2px; }
.thumb { width: 15px; height: 48px; border-radius: 7px; background: #cfcfd2; margin-top: 247px; }
.vbtn { display: flex; flex-direction: column; align-items: center; gap: 13px; padding-bottom: 9px; }
.side { width: 54px; padding: 44px 0 0 17px; display: flex; flex-direction: column; gap: 25px; }
.dots { margin: 469px 0 0 -17px; border-top: 1px solid #dcdcdf; padding: 21px 0 0 17px; }

/* status bar */
.status { height: 36px; flex: none; background: #f3f4f9; border-top: 1px solid #dcdcdf; border-bottom: 1px solid #857578; padding-left: 10px; display: grid; align-items: center; grid-template-columns: 77px 9px 94px 12px 23px 71px 12px 22px 79px 66px 842px 34px 12px 36px 31px 32px 33px 35px 16px 27px 44px 22px 27px 187px 28px 20px; }
.zoom { font-size: 15px; letter-spacing: -.3px; }
.slider { width: 173px; height: 20px; margin-left: 1px; }

.taskbar { height: 49px; flex: none; background: #3c3c3e; display: flex; }
.w { fill: none; stroke: #fff; stroke-width: 1.400; }
.taskbar .w { width: 20px; }
.apps { width: 249px; display: grid; grid-template-columns: repeat(4, 60px); align-items: center; justify-items: center; }
.apps svg { width: 20px; height: 20px; display: block; }
.running { display: grid; grid-template-columns: 62px 62px 57px 67px 62px 62px 62px; }
.running > span { width: 51px; height: 49px; display: flex; align-items: center; justify-content: center; border-bottom: 3px solid #5b97ec; padding-right: 2px; }
.running > .cur { width: 61px; background: #655a5d; }
.running svg { width: 28px; height: 28px; }
.typora { width: 28px; height: 28px; border-radius: 5px; background: #fff; color: #3c3c3e; font: 700 22px/28px "Liberation Serif", serif; text-align: center; }
.tray { margin-left: 911px; display: grid; grid-template-columns: 29px 31px 30px 30px 29px 36px 42px 48px 20px; align-items: center; }
.tray svg { width: 20px; height: 20px; }

/* floating layers */
.channel { position: absolute; left: 1522px; top: 50px; font: 700 38px/46px "Noto Sans", sans-serif; color: #fff; text-shadow: 0 0 1px #e3e3e6; }
.watermark { position: absolute; left: 1748px; top: 42px; font: italic 800 48px/54px "Noto Sans", sans-serif; color: #dcdde5; opacity: .6; letter-spacing: -1px; }
.digits { position: absolute; left: 1724px; top: 2px; width: 194px; height: 82px; opacity: .8; }
.popup { position: absolute; left: 1850px; top: 133px; width: 53px; height: 60px; background: #fff; box-shadow: 0 2px 8px 3px #c9c9cd; padding: 3px 2px 2px; }
.ptitle { display: flex; justify-content: space-between; padding-left: 2px; color: #9b9396; line-height: 26px; height: 30px; }
.ptitle b { width: 25px; height: 25px; background: #dcdcde; color: #fff; font-weight: 400; text-align: center; line-height: 23px; }
.popup button { display: block; width: 49px; height: 25px; border: 2px solid #4080d8; background: #e3e3e5; padding: 0; font: 12.500px/20px "Liberation Sans", sans-serif; color: #2c2c2e; }
.frame { position: absolute; left: 1px; top: 2px; width: 1917px; height: 1029px; border: solid #a87578; border-width: 0 1px; }
.rc { position: absolute; width: 25px; height: 24px; border: 0 solid #e53935; }
.tl { left: 0; top: 0; border-width: 2px 0 0 2px; }
.tr { right: 0; top: 0; border-width: 2px 2px 0 0; }
.bl2 { left: 0; top: 1010px; border-width: 0 0 4px 2px; }
.br2 { right: 0; top: 1010px; border-width: 0 2px 4px 0; }
.topred { position: absolute; left: 922px; top: 0; width: 76px; height: 2px; background: #e53935; z-index: 3; }
```
